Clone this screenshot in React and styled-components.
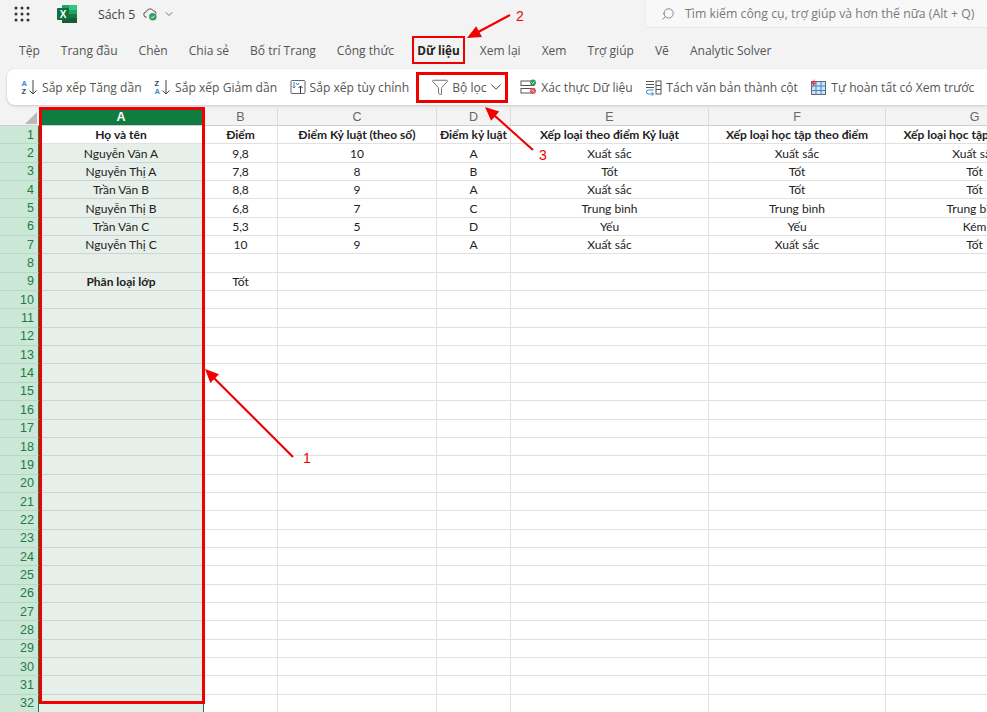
import React from "react";
import styled, { createGlobalStyle } from "styled-components";
import { ChevronDown, Search, Funnel } from "lucide-react";

const tabs = ["Tệp", "Trang đầu", "Chèn", "Chia sẻ", "Bố trí Trang", "Công thức", "Dữ liệu", "Xem lại", "Xem", "Trợ giúp", "Vẽ", "Analytic Solver"];

const colNames = ["A", "B", "C", "D", "E", "F", "G"];

const rows = [
    ["Họ và tên", "Điểm", "Điểm Kỷ luật (theo số)", "Điểm kỷ luật", "Xếp loại theo điểm Kỷ luật", "Xếp loại học tập theo điểm", "Xếp loại học tập theo điểm"],
    ["Nguyễn Văn A", "9,8", "10", "A", "Xuất sắc", "Xuất sắc", "Xuất sắc"],
    ["Nguyễn Thị A", "7,8", "8", "B", "Tốt", "Tốt", "Tốt"],
    ["Trần Văn B", "8,8", "9", "A", "Xuất sắc", "Tốt", "Tốt"],
    ["Nguyễn Thị B", "6,8", "7", "C", "Trung bình", "Trung bình", "Trung bình"],
    ["Trần Văn C", "5,3", "5", "D", "Yếu", "Yếu", "Kém"],
    ["Nguyễn Thị C", "10", "9", "A", "Xuất sắc", "Xuất sắc", "Tốt"],
    ["", "", "", "", "", "", ""],
    ["Phân loại lớp", "Tốt", "", "", "", "", ""],
];

const TOTAL_ROWS = 32;

const SortAscIcon = () => (
    <svg width="17" height="18" viewBox="0 0 17 18" fill="none">
        <text x="0.500" y="7.500" fontSize="7.500" fontFamily="Liberation Sans, sans-serif" fontWeight="700" fill="#2b88d8">A</text>
        <text x="0.500" y="16.300" fontSize="7.500" fontFamily="Liberation Sans, sans-serif" fontWeight="700" fill="#444">Z</text>
        <path d="M12 2v14M8.500 12.500l3.500 3.500 3.500-3.500" stroke="#444" strokeWidth="1" />
    </svg>
);

const SortDescIcon = () => (
    <svg width="17" height="18" viewBox="0 0 17 18" fill="none">
        <text x="0.500" y="7.500" fontSize="7.500" fontFamily="Liberation Sans, sans-serif" fontWeight="700" fill="#444">Z</text>
        <text x="0.500" y="16.300" fontSize="7.500" fontFamily="Liberation Sans, sans-serif" fontWeight="700" fill="#2b88d8">A</text>
        <path d="M12 2v14M8.500 12.500l3.500 3.500 3.500-3.500" stroke="#444" strokeWidth="1" />
    </svg>
);

const CustomSortIcon = () => (
    <svg width="16" height="16" viewBox="0 0 16 16" fill="none">
        <rect x="1" y="1.500" width="14" height="13" rx="1" stroke="#666" />
        <path d="M4 3v6M2.500 7.500 4 9l1.500-1.500M6 4l1.500 2L9 4" stroke="#2b88d8" />
        <path d="M10.500 14V7M8.500 9l2-2 2 2" stroke="#333" />
    </svg>
);

const ValidateIcon = () => (
    <svg width="17" height="16" viewBox="0 0 17 16" fill="none">
        <rect x="1" y="2" width="13" height="4.500" stroke="#555" />
        <rect x="1" y="9.500" width="13" height="4.500" stroke="#555" />
        <circle cx="13" cy="3.500" r="3" fill="#2e9e5b" />
        <circle cx="13" cy="12" r="3" fill="#e0526a" />
        <path d="M11.500 3.500 12.700 4.600 14.500 2.500" stroke="#fff" strokeWidth=".8" />
        <path d="M11.600 10.600 14.400 13.400" stroke="#fff" strokeWidth=".8" />
    </svg>
);

const TextColumnsIcon = () => (
    <svg width="17" height="17" viewBox="0 0 17 17" fill="none">
        <path d="M1 2.500h8M1 5.500h8M1 8.500h8" stroke="#555" />
        <rect x="11" y="2" width="5" height="13" stroke="#555" />
        <path d="M11 6.500h5M11 10.500h5" stroke="#555" />
        <path d="M8.500 11H3.500a2 2 0 0 0 0 4h5M6.500 13.200 8.700 15l-2.200 1.800" stroke="#2b88d8" />
    </svg>
);

const FlashFillIcon = () => (
    <svg width="17" height="17" viewBox="0 0 17 17" fill="none">
        <rect x="1.500" y="2.500" width="14" height="13" fill="#cfe4f6" stroke="#666" />
        <path d="M6 2.500v13M11 2.500v13M1.500 7h14M1.500 11.500h14" stroke="#3f87c5" />
        <path d="M4.500 0 1 5h2.200L2 8.500 6.500 3.500H4z" fill="#e8384f" />
    </svg>
);

const Waffle = () => (
    <svg width="16" height="16" viewBox="0 0 16 16" fill="#333">
        {[2, 8, 14].flatMap((y) =>
            [2, 8, 14].map((x) => <circle key={`${x}-${y}`} cx={x} cy={y} r="1.500" />)
        )}
    </svg>
);

const ExcelLogo = () => (
    <svg width="20" height="18" viewBox="0 0 20 18">
        <rect x="5" y="0" width="15" height="18" rx="1" fill="#21a366" />
        <rect x="12" y="0" width="8" height="5" fill="#33c481" />
        <rect x="12" y="5" width="8" height="4" fill="#21a366" />
        <rect x="12" y="9" width="8" height="4" fill="#107c41" />
        <rect x="5" y="13" width="15" height="5" fill="#185c37" />
        <rect x="0" y="3" width="12" height="12" rx="1" fill="#0f7040" />
        <text x="6" y="13" textAnchor="middle" fontSize="10" fontWeight="700" fontFamily="Liberation Sans, sans-serif" fill="#fff">X</text>
    </svg>
);

const CloudCheck = () => (
    <svg width="15" height="15" viewBox="0 0 16 15" fill="none">
        <path d="M4 10.500a3 3 0 0 1-.3-6 4 4 0 0 1 7.300-1 3.200 3.200 0 0 1 3 3" stroke="#444" />
        <circle cx="10.500" cy="10" r="4" fill="#3a9d63" />
        <path d="M8.800 10l1.200 1.200 2.200-2.400" stroke="#fff" />
    </svg>
);

const Arrow = ({ x1, y1, x2, y2 }) => {
    const angle = Math.atan2(y2 - y1, x2 - x1);
    const size = 15;
    const wing = 0.42;
    const ax = x2 - size * Math.cos(angle - wing);
    const ay = y2 - size * Math.sin(angle - wing);
    const bx = x2 - size * Math.cos(angle + wing);
    const by = y2 - size * Math.sin(angle + wing);
    return (
        <g>
            <line x1={x1} y1={y1} x2={x2 - 8 * Math.cos(angle)} y2={y2 - 8 * Math.sin(angle)} stroke="#f00000" strokeWidth="2.200" />
            <polygon points={`${x2},${y2} ${ax},${ay} ${bx},${by}`} fill="#f00000" />
        </g>
    );
};

const App = () => {
    return (
        <Page>
            <GlobalStyle />
            <TitleBar>
                <TitleLeft>
                    <WaffleSlot><Waffle /></WaffleSlot>
                    <ExcelLogo />
                    <DocName>Sách 5</DocName>
                    <CloudCheck />
                    <TitleChevron size={12} color="#777" />
                </TitleLeft>
                <SearchBox>
                    <SearchIcon size={14} color="#666" strokeWidth={1.3} />
                    <span>Tìm kiếm công cụ, trợ giúp và hơn thế nữa (Alt + Q)</span>
                </SearchBox>
            </TitleBar>

            <TabBar>
                {tabs.map((tab) => (
                    <Tab key={tab} $active={tab === "Dữ liệu"}>{tab}</Tab>
                ))}
            </TabBar>

            <Toolbar>
                <ToolButton><SortAscIcon />Sắp xếp Tăng dần</ToolButton>
                <ToolButton><SortDescIcon />Sắp xếp Giảm dần</ToolButton>
                <ToolButton><CustomSortIcon />Sắp xếp tùy chỉnh</ToolButton>
                <FilterButton>
                    <Funnel size={18} color="#444" strokeWidth={1} />
                    Bộ lọc
                    <FilterChevron size={18} color="#444" strokeWidth={1.3} />
                </FilterButton>
                <ToolButton><ValidateIcon />Xác thực Dữ liệu</ToolButton>
                <ToolButton><TextColumnsIcon />Tách văn bản thành cột</ToolButton>
                <ToolButton><FlashFillIcon />Tự hoàn tất có Xem trước</ToolButton>
            </Toolbar>

            <Sheet>
                <SheetRow>
                    <Corner />
                    {colNames.map((name, i) => (
                        <ColHead key={name} $selected={i === 0}>{name}</ColHead>
                    ))}
                </SheetRow>
                {Array.from({ length: TOTAL_ROWS }, (_, r) => (
                    <SheetRow key={r}>
                        <RowHead>{r + 1}</RowHead>
                        {colNames.map((name, c) => (
                            <Cell
                                key={name}
                                $inColA={c === 0 && r > 0}
                                $bold={r === 0 || (r === 8 && c === 0)}
                            >
                                {rows[r] ? rows[r][c] : ""}
                            </Cell>
                        ))}
                    </SheetRow>
                ))}
            </Sheet>

            <ColumnMark />
            <Overlay width="987" height="712" viewBox="0 0 987 712">
                <Arrow x1={293} y1={457} x2={205} y2={369} />
                <Arrow x1={510} y1={15} x2={467} y2={38} />
                <Arrow x1={533} y1={150} x2={485} y2={107} />
            </Overlay>
            <Note $x={303} $y={450}>1</Note>
            <Note $x={516} $y={8}>2</Note>
            <Note $x={539} $y={147}>3</Note>
        </Page>
    );
};

const GlobalStyle = createGlobalStyle`
    html, body {
        margin: 0;
        padding: 0;
        background: #f3f3f3;
    }
`;

const Page = styled.div`
    position: relative;
    width: 987px;
    height: 712px;
    overflow: hidden;
    background: #f3f3f3;
    font-family: "Open Sans", sans-serif;
    color: #424242;
`;

const TitleBar = styled.div`
    display: flex;
    justify-content: space-between;
    height: 28px;
`;

const TitleLeft = styled.div`
    display: flex;
    align-items: center;
    padding-left: 14px;
`;

const WaffleSlot = styled.div`
    display: flex;
    width: 43px;
`;

const DocName = styled.span`
    font-size: 12.3px;
    margin: 0 8px 0 21px;
`;

const TitleChevron = styled(ChevronDown)`
    margin-left: 5px;
`;

const SearchBox = styled.div`
    display: flex;
    align-items: center;
    gap: 10px;
    width: 342px;
    box-sizing: border-box;
    padding-left: 15px;
    background: #f8f8f8;
    border-left: 1px solid #ececec;
    border-bottom: 1px solid #e4e4e4;
    border-bottom-left-radius: 4px;
    font-size: 12.3px;
    color: #7a7a7a;
    white-space: nowrap;
`;

const SearchIcon = styled(Search)`
    transform: scaleX(-1);
`;

const TabBar = styled.div`
    display: flex;
    align-items: center;
    gap: 21px;
    box-sizing: border-box;
    height: 41px;
    padding: 3px 0 0 19px;
`;

const Tab = styled.div`
    font-size: 12.05px;
    white-space: nowrap;
    color: ${(p) => (p.$active ? "#222" : "#555")};
    font-weight: ${(p) => (p.$active ? 700 : 400)};
    ${(p) => p.$active && `
        font-size: 11.8px;
        margin: 0 -6px 0 -3px;
        padding: 4px 3px;
        border: 2px solid #f00000;
    `}
`;

const Toolbar = styled.div`
    display: flex;
    align-items: center;
    gap: 12.5px;
    height: 36px;
    margin-left: 7px;
    padding-left: 14px;
    background: #fff;
    border-radius: 8px 0 0 8px;
    box-shadow: 0 1px 3px rgba(0, 0, 0, 0.18);
    font-size: 12.1px;
    color: #555;
    white-space: nowrap;
`;

const ToolButton = styled.div`
    display: flex;
    align-items: center;
    gap: 4px;
`;

const FilterButton = styled(ToolButton)`
    box-sizing: border-box;
    height: 31px;
    width: 92px;
    margin: 0 -0.5px 0 -5.5px;
    padding-left: 12px;
    border: 3px solid #f00000;
    gap: 3px;
`;

const FilterChevron = styled(ChevronDown)`
    margin-left: -3px;
`;

const Sheet = styled.div`
    margin-top: 3px;
    background: #fff;
`;

const SheetRow = styled.div`
    display: grid;
    grid-template-columns: 39px 165px 74px 159px 74px 198px 177px 178px;
    height: 18.35px;
    &:first-child {
        height: 18px;
    }
`;

const Corner = styled.div`
    position: relative;
    background: #f3f3f3;
    border-bottom: 1px solid #cfcfcf;
    &::after {
        content: "";
        position: absolute;
        right: 2px;
        bottom: 1px;
        border-style: solid;
        border-width: 0 0 12px 12px;
        border-color: transparent transparent #b9b9b9 transparent;
    }
`;

const ColHead = styled.div`
    display: flex;
    align-items: center;
    justify-content: center;
    box-sizing: border-box;
    font-family: "Liberation Sans", sans-serif;
    font-size: 12.5px;
    font-weight: ${(p) => (p.$selected ? 700 : 400)};
    color: ${(p) => (p.$selected ? "#fff" : "#666")};
    background: ${(p) => (p.$selected ? "#107c41" : "#f3f3f3")};
    border-right: 1px solid #dcdcdc;
    border-bottom: 1px solid #cfcfcf;
`;

const RowHead = styled.div`
    display: flex;
    align-items: center;
    justify-content: flex-end;
    box-sizing: border-box;
    padding-right: 4px;
    font-family: "Liberation Sans", sans-serif;
    font-size: 12.5px;
    color: #1d7a4a;
    background: #cbe8d6;
    border-right: 1px solid #107c41;
    border-bottom: 1px solid #b7d8c4;
`;

const Cell = styled.div`
    display: flex;
    align-items: center;
    justify-content: center;
    box-sizing: border-box;
    overflow: hidden;
    font-family: Lato, sans-serif;
    font-size: 12px;
    white-space: nowrap;
    color: #222;
    font-weight: ${(p) => (p.$bold ? 700 : 400)};
    background: ${(p) => (p.$inColA ? "#e6efe9" : "#fff")};
    border-right: 1px solid ${(p) => (p.$inColA ? "#107c41" : "#e1e1e1")};
    border-bottom: 1px solid ${(p) => (p.$inColA ? "#cdd3cf" : "#e1e1e1")};
`;

const ColumnMark = styled.div`
    position: absolute;
    left: 38.5px;
    top: 107px;
    width: 166px;
    height: 597px;
    box-sizing: border-box;
    border: 3px solid #f00000;
    pointer-events: none;
`;

const Overlay = styled.svg`
    position: absolute;
    left: 0;
    top: 0;
    pointer-events: none;
`;

const Note = styled.span`
    position: absolute;
    left: ${(p) => p.$x}px;
    top: ${(p) => p.$y}px;
    font-family: "Liberation Sans", sans-serif;
    font-size: 14px;
    line-height: 16px;
    color: #f00000;
`;

export default App;
